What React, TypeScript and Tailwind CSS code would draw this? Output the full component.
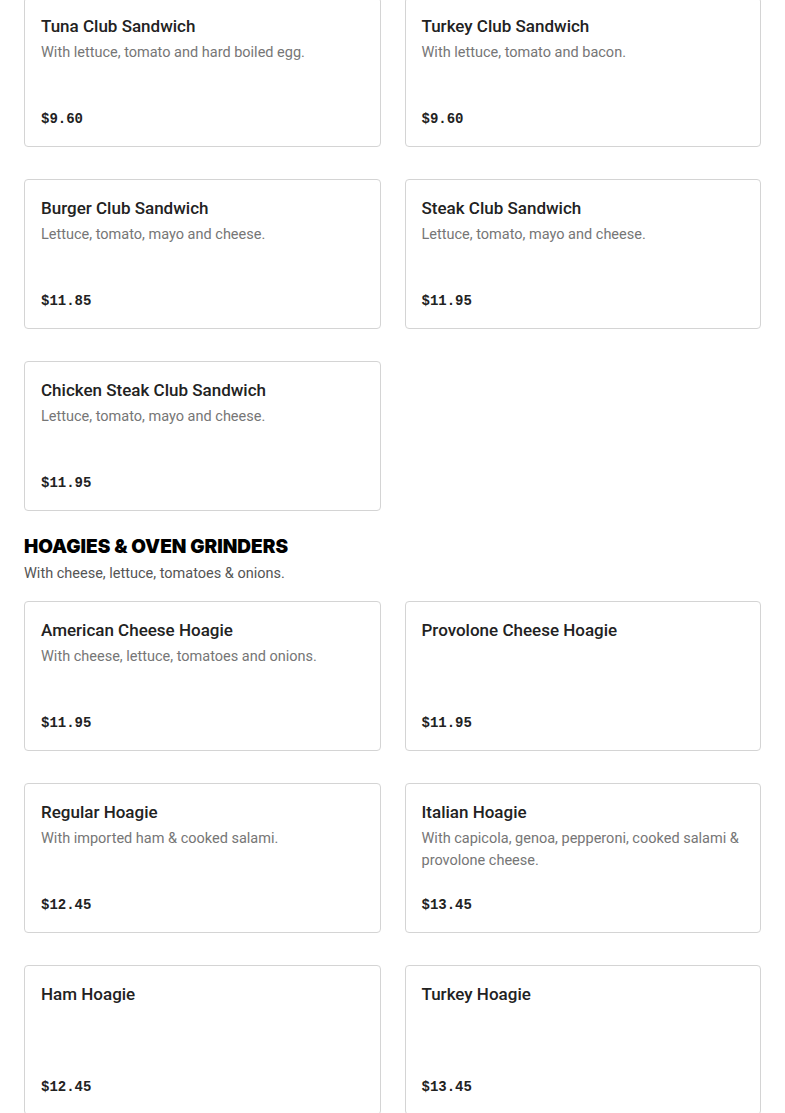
const clubs = [
  { name: 'Tuna Club Sandwich', desc: 'With lettuce, tomato and hard boiled egg.', price: '$9.60' },
  { name: 'Turkey Club Sandwich', desc: 'With lettuce, tomato and bacon.', price: '$9.60' },
  { name: 'Burger Club Sandwich', desc: 'Lettuce, tomato, mayo and cheese.', price: '$11.85' },
  { name: 'Steak Club Sandwich', desc: 'Lettuce, tomato, mayo and cheese.', price: '$11.95' },
  { name: 'Chicken Steak Club Sandwich', desc: 'Lettuce, tomato, mayo and cheese.', price: '$11.95' },
];

const hoagies = [
  { name: 'American Cheese Hoagie', desc: 'With cheese, lettuce, tomatoes and onions.', price: '$11.95' },
  { name: 'Provolone Cheese Hoagie', desc: '', price: '$11.95' },
  { name: 'Regular Hoagie', desc: 'With imported ham & cooked salami.', price: '$12.45' },
  { name: 'Italian Hoagie', desc: 'With capicola, genoa, pepperoni, cooked salami & provolone cheese.', price: '$13.45' },
  { name: 'Ham Hoagie', desc: '', price: '$12.45' },
  { name: 'Turkey Hoagie', desc: '', price: '$13.45' },
];

type Item = { name: string; desc: string; price: string };

const ItemCard = ({ item }: { item: Item }) => (
  <div className="flex h-[150px] flex-col rounded-[4px] border border-[#d4d4d4] bg-white px-4 pt-4 pb-[17px]">
    <h3 className="font-['Roboto',sans-serif] text-[17px] leading-6 font-medium text-[#222]">{item.name}</h3>
    {item.desc && (
      <p className="mt-1 font-['Roboto',sans-serif] text-[14.5px] leading-[22px] text-[#767676]">{item.desc}</p>
    )}
    <span className="mt-auto font-['Liberation_Mono',monospace] text-[14px] leading-5 font-bold text-[#222]">
      {item.price}
    </span>
  </div>
);

export default function App() {
  return (
    <div className="min-h-screen bg-white font-['Roboto',sans-serif]">
      <div className="-mt-[3px] px-6">
        <div className="grid grid-cols-2 gap-x-6 gap-y-8">
          {clubs.map((item) => (
            <ItemCard key={item.name} item={item} />
          ))}
        </div>

        {/* Hoagies section */}
        <div className="mt-[22px]">
          <h2 className="font-['Inter',sans-serif] text-[19px] leading-7 font-black text-black uppercase">
            Hoagies &amp; Oven Grinders
          </h2>
          <p className="mt-[2px] text-[14.5px] leading-[22px] text-[#555]">
            With cheese, lettuce, tomatoes &amp; onions.
          </p>
        </div>
        <div className="mt-[16px] grid grid-cols-2 gap-x-6 gap-y-8">
          {hoagies.map((item) => (
            <ItemCard key={item.name} item={item} />
          ))}
        </div>
      </div>
    </div>
  );
}
